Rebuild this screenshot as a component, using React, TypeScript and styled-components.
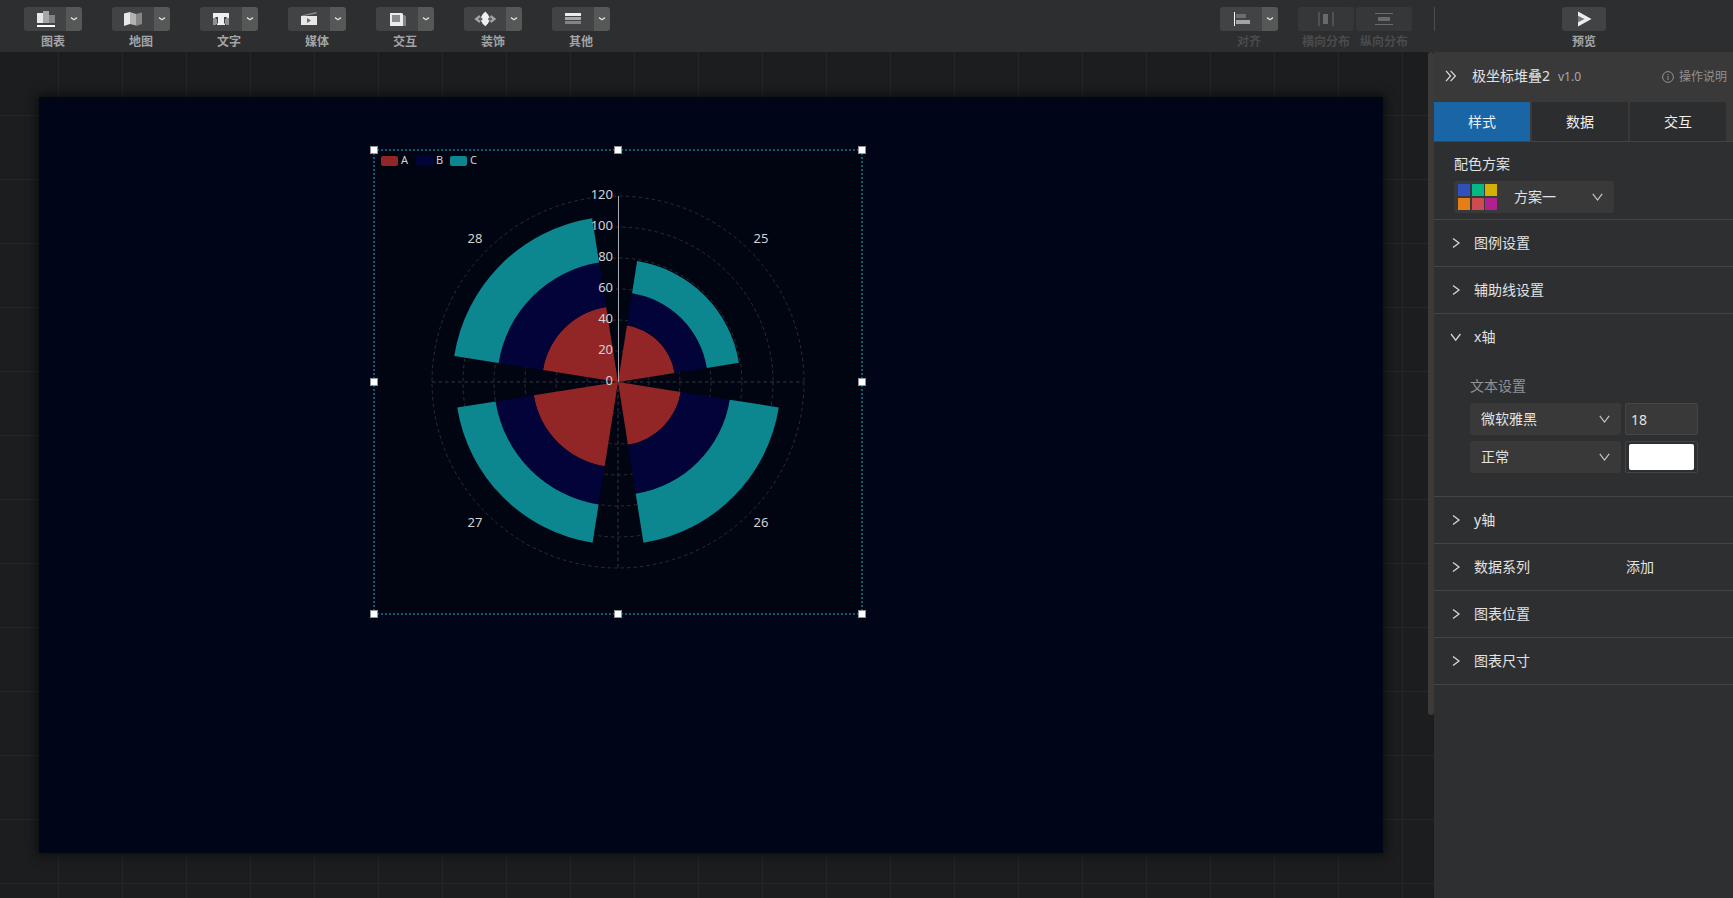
import React from "react";
import styled, { createGlobalStyle } from "styled-components";

const GlobalStyle = createGlobalStyle`
  *, *::before, *::after { box-sizing: border-box; }
  body {
    margin: 0;
    background: #1c1d1f;
    color: #e2e2e2;
    font: 14px/20px "Noto Sans", "Noto Sans CJK SC", sans-serif;
  }
  button, input, select { font: inherit; color: inherit; }
  button { border: 0; padding: 0; background: none; cursor: pointer; }
  h1, h2, p { margin: 0; font-weight: 400; }
  svg { display: block; }
`;

const Page = styled.div`
  display: flex;
  flex-direction: column;
  min-height: 100vh;
`;

/* ---------- toolbar ---------- */

const Toolbar = styled.header`
  display: flex;
  justify-content: space-between;
  height: 52px;
  padding-left: 24px;
  background: #2d2e30;
`;

const ToolGroup = styled.div`
  display: flex;
  gap: 30px;
  padding-top: 7px;
`;

const RightTools = styled.div`
  display: flex;
  padding-top: 7px;
`;

const AlignTools = styled.div`
  display: flex;
  gap: 20px;
`;

const DistributeTools = styled.div`
  display: flex;
  gap: 2px;
`;

const Tool = styled.div<{ $off?: boolean }>`
  display: flex;
  flex-direction: column;
  gap: 2px;
  font-size: 12px;
  line-height: 18px;
  font-weight: 700;
  color: ${(p) => (p.$off ? "#4a4b4d" : "#a4a4a4")};
`;

const ToolLabel = styled.span`
  text-align: center;
`;

const ToolButtons = styled.div`
  display: flex;
  height: 24px;
  border-radius: 3px;
  overflow: hidden;
`;

const ToolButton = styled.button<{ $w: number; $off?: boolean }>`
  display: flex;
  align-items: center;
  justify-content: center;
  width: ${(p) => p.$w}px;
  background: ${(p) => (p.$off ? "#363739" : "#424345")};
`;

const ToolMore = styled.button`
  display: flex;
  align-items: center;
  justify-content: center;
  width: 16px;
  background: #565857;
`;

const Divider = styled.span`
  width: 1px;
  height: 24px;
  margin-left: 22px;
  background: #4c4d4f;
`;

const PreviewArea = styled.div`
  display: flex;
  justify-content: center;
  width: 298px;
`;

/* ---------- workspace ---------- */

const Body = styled.div`
  display: flex;
  flex: 1;
`;

const Workspace = styled.main`
  position: relative;
  flex: 1;
  min-width: 0;
  padding: 45px 51px 45px 39px;
  background-color: #1c1d1f;
  background-image: linear-gradient(to right, #252628 1px, transparent 1px),
    linear-gradient(to bottom, #252628 1px, transparent 1px);
  background-size: 64px 64px;
  background-position: 58px 63px;
`;

const Board = styled.div`
  position: relative;
  aspect-ratio: 16 / 9;
  background: #000617;
  box-shadow: 0 0 10px 2px #0c0d0b;
`;

const Widget = styled.div`
  position: absolute;
  left: 334px;
  top: 52px;
  width: 490px;
  height: 466px;
  border: 2px dotted #085d75;
  background: #010512;
`;

const HandleFrame = styled.div`
  position: absolute;
  inset: -1px;
`;

const Handle = styled.span<{ $x: number; $y: number }>`
  position: absolute;
  left: calc(${(p) => p.$x}% - 4px);
  top: calc(${(p) => p.$y}% - 4px);
  width: 8px;
  height: 8px;
  border: 1px solid #8e9096;
  background: #fff;
`;

const ScrollThumb = styled.span`
  position: absolute;
  top: 0;
  right: 0;
  width: 6px;
  height: 663px;
  border-radius: 3px;
  background: #3c3b3a;
`;

/* ---------- side panel ---------- */

const Panel = styled.aside`
  flex: none;
  width: 299px;
  background: #2e2f31;
`;

const PanelHead = styled.div`
  display: flex;
  align-items: center;
  height: 50px;
  padding: 0 6px 2px 11px;
  background: #383938;
`;

const Collapse = styled.button`
  width: 12px;
  margin-right: 15px;
`;

const Title = styled.h1`
  font-size: 14px;
`;

const Version = styled.span`
  margin-left: 8px;
  padding-top: 2px;
  font-size: 12px;
  color: #a9a9a9;
`;

const HelpLink = styled.a`
  display: flex;
  align-items: center;
  gap: 5px;
  margin-left: auto;
  padding-top: 2px;
  font-size: 12px;
  color: #929292;
  text-decoration: none;
`;

const Tabs = styled.div`
  display: grid;
  grid-template-columns: repeat(3, 1fr);
  gap: 2px;
  height: 40px;
  padding-right: 7px;
  background: #383938;
  border-bottom: 1px solid #434446;
`;

const Tab = styled.button<{ $active?: boolean }>`
  background: ${(p) => (p.$active ? "#1965a5" : "#2c2d2f")};
  color: #f0f0f0;
`;

const Section = styled.section`
  border-bottom: 1px solid #434446;
`;

const SchemeSection = styled(Section)`
  padding: 12px 20px 6px;
`;

const SchemeLabel = styled.label`
  display: block;
  margin-bottom: 7px;
`;

const SchemeBox = styled.div`
  display: flex;
  align-items: center;
  width: 160px;
  height: 32px;
  padding-left: 4px;
  border-radius: 3px;
  background: #383938;
`;

const Swatches = styled.div`
  display: grid;
  flex: none;
  grid-template-columns: repeat(3, 12px);
  justify-content: space-between;
  row-gap: 2px;
  width: 39px;
`;

const Swatch = styled.span<{ $c: string }>`
  height: 12px;
  background: ${(p) => p.$c};
`;

const SelectWrap = styled.div<{ $filled?: boolean }>`
  display: grid;
  flex: 1;
  align-items: center;
  height: 32px;
  border-radius: 3px;
  background: ${(p) => (p.$filled ? "#383938" : "transparent")};
  & > * { grid-area: 1 / 1; }
  & > svg { justify-self: end; margin-right: 11px; pointer-events: none; }
`;

const Select = styled.select<{ $pad: number }>`
  appearance: none;
  width: 100%;
  height: 32px;
  padding: 0 28px 1px ${(p) => p.$pad}px;
  border: 0;
  background: none;
`;

const RowHead = styled.div`
  display: grid;
  grid-template-columns: 192px 1fr;
  height: 46px;
`;

const Toggle = styled.button`
  display: flex;
  align-items: center;
  gap: 12px;
  padding-left: 16px;
  text-align: left;
`;

const AddButton = styled.button`
  justify-self: start;
`;

const Fields = styled.div`
  display: grid;
  grid-template-columns: 151px 73px;
  gap: 6px 4px;
  padding: 16px 0 23px 36px;
`;

const FieldsTitle = styled.p`
  grid-column: 1 / -1;
  margin-bottom: 1px;
  color: #929292;
`;

const NumberInput = styled.input`
  width: 100%;
  height: 32px;
  padding: 0 5px;
  border: 1px solid #454647;
  border-radius: 2px;
  background: #383938;
`;

const ColorInput = styled.input`
  appearance: none;
  width: 100%;
  height: 32px;
  padding: 2px 3px;
  border: 1px solid #434446;
  border-radius: 2px;
  background: none;
  &::-webkit-color-swatch-wrapper { padding: 0; }
  &::-webkit-color-swatch { border: 0; border-radius: 2px; }
`;

/* ---------- icons ---------- */

const ChevronSmall = () => (
  <svg width="8" height="4" viewBox="0 0 8 4" fill="none" stroke="#dcdcdc" strokeWidth="1.3">
    <path d="M1 .6 4 2.700 7 .6" />
  </svg>
);

const ChevronDown = () => (
  <svg width="11" height="8" viewBox="0 0 11 8" fill="none" stroke="#c6c6c6" strokeWidth="1.2">
    <path d="M.8 .8 5.5 7 10.2 .8" />
  </svg>
);

const Arrow = ({ open }: { open?: boolean }) => (
  <svg width="12" height="12" viewBox="0 0 12 12" fill="none" stroke="#d6d6d6" strokeWidth="1.3">
    <path d={open ? "M1 3 5.7 9.2 10.4 3" : "M3 1.4 9 6 3 10.6"} />
  </svg>
);

const DoubleArrow = () => (
  <svg width="12" height="12" viewBox="0 0 12 12" fill="none" stroke="#dedede" strokeWidth="1.2">
    <path d="M1 .8 5.6 6 1 11.2M5.6 .8 10.4 6 5.6 11.2" />
  </svg>
);

const InfoIcon = () => (
  <svg width="12" height="12" viewBox="0 0 12 12" fill="none" stroke="#929292">
    <circle cx="6" cy="6" r="5.4" />
    <path d="M6 5v4M6 3v1.2" />
  </svg>
);

const icons: Record<string, React.ReactNode> = {
  chart: (
    <>
      <path d="M1 4h6v10H1z" fill="#e8e8e8" />
      <path d="M7 2h6v12H7z" fill="#a6a6a6" />
      <path d="M13 6h6v8h-6z" fill="#828282" />
      <path d="M1 16h18v2H1z" fill="#fff" />
    </>
  ),
  map: (
    <>
      <path d="M0 4.5 6 3v12l-6 2z" fill="#e8e8e8" />
      <path d="M6 3l6 2v11.500L6 15z" fill="#b2b2b2" />
      <path d="M12 5l6-1.500V15l-6 2z" fill="#868686" />
    </>
  ),
  text: (
    <>
      <path d="M1 9h3v1h1v5H4v1H1zM17 9h-3v1h-1v5h1v1h3z" fill="#909090" />
      <path d="M1 4h16v5h-1.500L14 8h-2v6l1 1v1H5v-1l1-1V8H4L2.500 9H1z" fill="#efefef" />
    </>
  ),
  media: (
    <>
      <path d="M1 6.500 16.500 3v1.500L4 7z" fill="#8f8f8f" />
      <path d="M1 7h16v9H1z" fill="#e8e8e8" />
      <path d="M7 9v5l4-2.500z" fill="#6c6c6c" />
    </>
  ),
  interact: (
    <>
      <path d="M14 6h2.500L18 7.500V17h-4z" fill="#858585" />
      <path d="M2 4h12l1 1v12H2z" fill="#ececec" />
      <path d="M4 6h8v7H4z" fill="#8b8b8b" />
    </>
  ),
  decorate: (
    <>
      <path d="M4 7 .2 10 4 13M14.500 7l3.800 3-3.800 3" fill="none" stroke="#a2a2a2" strokeWidth="2.400" />
      <path d="M9.300 2.500 12 5.500 14.500 10 12 14.500 9.300 17.300 6.500 14.500 4 10 6.500 5.500z" fill="#efefef" />
      <circle cx="5" cy="10" r="1.500" fill="#5c5d5e" />
      <circle cx="13.600" cy="10" r="1.500" fill="#5c5d5e" />
    </>
  ),
  other: (
    <>
      <path d="M1 4h16v3H1z" fill="#ececec" />
      <path d="M1 8h16v3H1z" fill="#a8a8a8" />
      <path d="M1 12h16v3H1z" fill="#848484" />
    </>
  ),
  align: (
    <>
      <path d="M2 3h1v14H2z" fill="#fff" />
      <path d="M4 5h10v4H4z" fill="#6d6d6d" />
      <path d="M4 11h14v4H4z" fill="#a3a3a3" />
    </>
  ),
  horizontal: (
    <>
      <path d="M1 3h2v14H1zM15 3h2v14h-2z" fill="#505153" />
      <path d="M6 5h5v10H6z" fill="#68696b" />
    </>
  ),
  vertical: (
    <>
      <path d="M0 4h18v1H0zM0 15h18v1H0z" fill="#68696b" />
      <path d="M3 8h12v4H3z" fill="#68696b" />
    </>
  ),
  preview: (
    <>
      <path d="M3 6 10 10l-7 4z" fill="#777" />
      <path d="M3 2.500 16.500 10 3 17.500V13.300L9.500 10 3 6.700z" fill="#ededed" />
    </>
  ),
};

const ToolIcon = ({ name }: { name: string }) => (
  <svg width="18" height="20" viewBox="0 0 18 20" overflow="visible">
    {icons[name]}
  </svg>
);

/* ---------- chart ---------- */

const CX = 243;
const CY = 231;
const RADIUS = 186;
const MAX = 120;
const SERIES_COLORS = ["#922626", "#010339", "#0c878f"];

const legend = [
  { name: "A", x: 6 },
  { name: "B", x: 41 },
  { name: "C", x: 75 },
];

const slices = [
  { label: "25", start: 9, stops: [37, 58, 79], lx: 386, ly: 92 },
  { label: "26", start: 99, stops: [41, 73, 105], lx: 386, ly: 376 },
  { label: "27", start: 189, stops: [55, 80, 105], lx: 100, ly: 376 },
  { label: "28", start: 279, stops: [49, 78, 107], lx: 100, ly: 92 },
];

const point = (value: number, deg: number) => {
  const r = (value / MAX) * RADIUS;
  const a = (deg * Math.PI) / 180;
  return `${(CX + r * Math.sin(a)).toFixed(2)} ${(CY - r * Math.cos(a)).toFixed(2)}`;
};

const wedge = (inner: number, outer: number, start: number) => {
  const end = start + 72;
  const ro = (outer / MAX) * RADIUS;
  const ri = (inner / MAX) * RADIUS;
  return `M${point(inner, start)}L${point(outer, start)}A${ro} ${ro} 0 0 1 ${point(outer, end)}L${point(inner, end)}A${ri} ${ri} 0 0 0 ${point(inner, start)}Z`;
};

const ChartSvg = styled.svg`
  width: 100%;
  height: 100%;
  font-size: 13px;
  fill: #d2d2d4;
`;

const PolarChart = () => (
  <ChartSvg viewBox="0 0 486 462" role="img" aria-label="极坐标堆叠2">
    <g fontSize="11">
      {legend.map((l, i) => (
        <g key={l.name}>
          <rect x={l.x} y="5" width="17" height="10" rx="2" fill={SERIES_COLORS[i]} />
          <text x={l.x + 20} y="13">{l.name}</text>
        </g>
      ))}
    </g>
    <g fill="none" stroke="#2a2d33" strokeDasharray="3.500 3">
      {[20, 40, 60, 80, 100, 120].map((v) => (
        <circle key={v} cx={CX} cy={CY} r={(v / MAX) * RADIUS} />
      ))}
      <path stroke="#36393f" d={`M${CX - RADIUS} ${CY}H${CX + RADIUS}M${CX} ${CY}V${CY + RADIUS}`} />
    </g>
    {slices.map((s) =>
      s.stops.map((v, i) => (
        <path key={s.label + i} fill={SERIES_COLORS[i]} d={wedge(i ? s.stops[i - 1] : 0, v, s.start)} />
      ))
    )}
    <path d={`M${CX + 0.5} ${CY}V${CY - RADIUS}`} stroke="#a9aaad" />
    <g textAnchor="end">
      {[0, 20, 40, 60, 80, 100, 120].map((v) => (
        <text key={v} x={CX - 5} y={CY + 3 - v * 1.55}>{v}</text>
      ))}
    </g>
    <g textAnchor="middle">
      {slices.map((s) => (
        <text key={s.label} x={s.lx} y={s.ly}>{s.label}</text>
      ))}
    </g>
  </ChartSvg>
);

/* ---------- data ---------- */

const tools = [
  { icon: "chart", label: "图表" },
  { icon: "map", label: "地图" },
  { icon: "text", label: "文字" },
  { icon: "media", label: "媒体" },
  { icon: "interact", label: "交互" },
  { icon: "decorate", label: "装饰" },
  { icon: "other", label: "其他" },
];

const palette = ["#3050bc", "#06b884", "#d4b004", "#e67e16", "#cd4c52", "#b02090"];

const handles = [
  [0, 0], [50, 0], [100, 0],
  [0, 50], [100, 50],
  [0, 100], [50, 100], [100, 100],
];

const Row = ({ label, open, action, children }: {
  label: string;
  open?: boolean;
  action?: string;
  children?: React.ReactNode;
}) => (
  <Section>
    <RowHead>
      <Toggle aria-expanded={!!open}>
        <Arrow open={open} />
        {label}
      </Toggle>
      {action && <AddButton>{action}</AddButton>}
    </RowHead>
    {children}
  </Section>
);

export default function App() {
  return (
    <Page>
      <GlobalStyle />
      <Toolbar>
        <ToolGroup>
          {tools.map((t) => (
            <Tool key={t.icon}>
              <ToolButtons>
                <ToolButton $w={42} aria-label={t.label}>
                  <ToolIcon name={t.icon} />
                </ToolButton>
                <ToolMore aria-label={`${t.label}菜单`}>
                  <ChevronSmall />
                </ToolMore>
              </ToolButtons>
              <ToolLabel>{t.label}</ToolLabel>
            </Tool>
          ))}
        </ToolGroup>
        <RightTools>
          <AlignTools>
            <Tool $off>
              <ToolButtons>
                <ToolButton $w={42} aria-label="对齐">
                  <ToolIcon name="align" />
                </ToolButton>
                <ToolMore aria-label="对齐菜单">
                  <ChevronSmall />
                </ToolMore>
              </ToolButtons>
              <ToolLabel>对齐</ToolLabel>
            </Tool>
            <DistributeTools>
              <Tool $off>
                <ToolButtons>
                  <ToolButton $w={56} $off aria-label="横向分布">
                    <ToolIcon name="horizontal" />
                  </ToolButton>
                </ToolButtons>
                <ToolLabel>横向分布</ToolLabel>
              </Tool>
              <Tool $off>
                <ToolButtons>
                  <ToolButton $w={56} $off aria-label="纵向分布">
                    <ToolIcon name="vertical" />
                  </ToolButton>
                </ToolButtons>
                <ToolLabel>纵向分布</ToolLabel>
              </Tool>
            </DistributeTools>
          </AlignTools>
          <Divider />
          <PreviewArea>
            <Tool>
              <ToolButtons>
                <ToolButton $w={44} aria-label="预览">
                  <ToolIcon name="preview" />
                </ToolButton>
              </ToolButtons>
              <ToolLabel>预览</ToolLabel>
            </Tool>
          </PreviewArea>
        </RightTools>
      </Toolbar>
      <Body>
        <Workspace>
          <Board>
            <Widget>
              <PolarChart />
              <HandleFrame>
                {handles.map(([x, y]) => (
                  <Handle key={`${x}-${y}`} $x={x} $y={y} />
                ))}
              </HandleFrame>
            </Widget>
          </Board>
          <ScrollThumb />
        </Workspace>
        <Panel>
          <PanelHead>
            <Collapse aria-label="收起">
              <DoubleArrow />
            </Collapse>
            <Title>极坐标堆叠2</Title>
            <Version>v1.0</Version>
            <HelpLink href="#help">
              <InfoIcon />
              操作说明
            </HelpLink>
          </PanelHead>
          <Tabs role="tablist">
            <Tab role="tab" aria-selected $active>样式</Tab>
            <Tab role="tab">数据</Tab>
            <Tab role="tab">交互</Tab>
          </Tabs>
          <SchemeSection>
            <SchemeLabel htmlFor="scheme">配色方案</SchemeLabel>
            <SchemeBox>
              <Swatches>
                {palette.map((c) => (
                  <Swatch key={c} $c={c} />
                ))}
              </Swatches>
              <SelectWrap>
                <Select id="scheme" $pad={17} defaultValue="1">
                  <option value="1">方案一</option>
                </Select>
                <ChevronDown />
              </SelectWrap>
            </SchemeBox>
          </SchemeSection>
          <Row label="图例设置" />
          <Row label="辅助线设置" />
          <Row label="x轴" open>
            <Fields>
              <FieldsTitle>文本设置</FieldsTitle>
              <SelectWrap $filled>
                <Select aria-label="字体" $pad={11}>
                  <option>微软雅黑</option>
                </Select>
                <ChevronDown />
              </SelectWrap>
              <NumberInput aria-label="字号" defaultValue="18" />
              <SelectWrap $filled>
                <Select aria-label="字重" $pad={11}>
                  <option>正常</option>
                </Select>
                <ChevronDown />
              </SelectWrap>
              <ColorInput type="color" aria-label="颜色" defaultValue="#ffffff" />
            </Fields>
          </Row>
          <Row label="y轴" />
          <Row label="数据系列" action="添加" />
          <Row label="图表位置" />
          <Row label="图表尺寸" />
        </Panel>
      </Body>
    </Page>
  );
}
